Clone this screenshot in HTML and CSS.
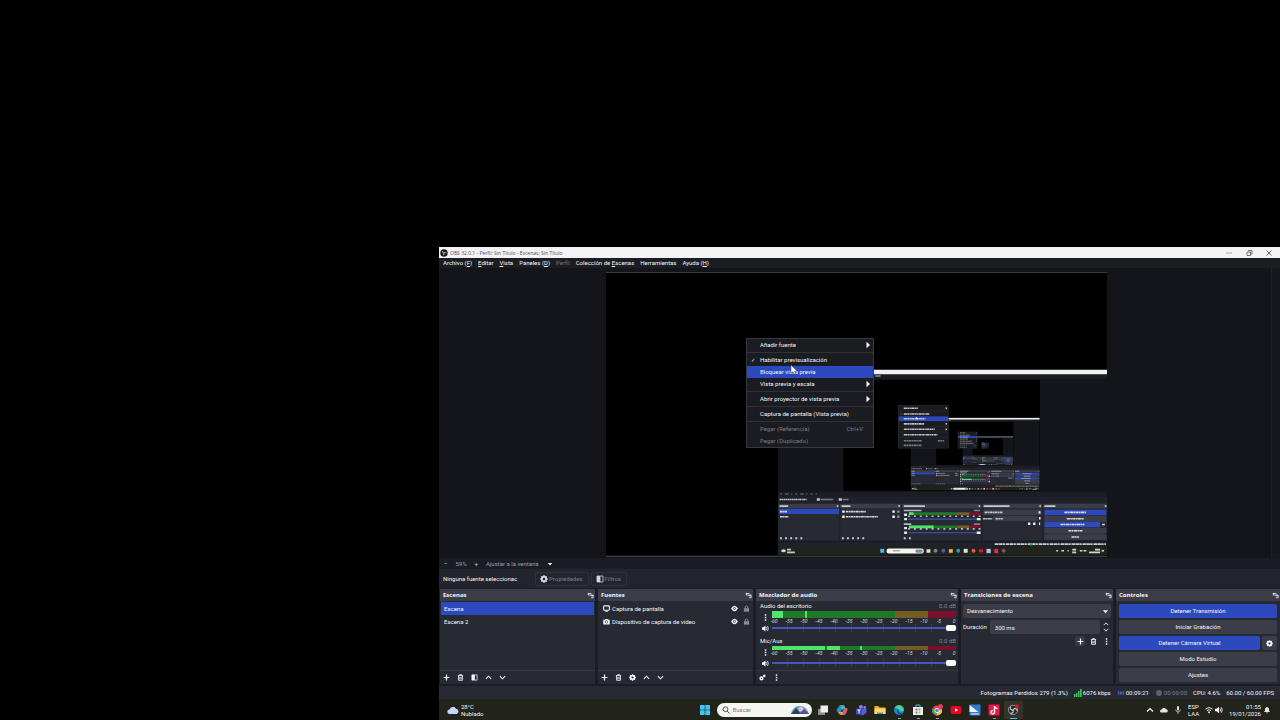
FILE: index.html
```html
<!DOCTYPE html>
<html lang="es">
<head>
<meta charset="utf-8">
<title>OBS 32.0.1 - Perfil: Sin Título - Escenas: Sin Título</title>
<link rel="stylesheet" href="styles.css">
</head>
<body>
<svg class="sprite" aria-hidden="true">
  <symbol id="i-plus" viewBox="0 0 8 8"><path d="M4 .7v6.600M.7 4h6.600" fill="none" stroke="currentColor" stroke-width="1.400"/></symbol>
  <symbol id="i-trash" viewBox="0 0 8 8"><path d="M1 1.800h6M3 1.500V.7h2v.8M1.800 2v5.200h4.400V2M3.300 3.300v2.800M4.700 3.300v2.800" fill="none" stroke="currentColor" stroke-width="1"/></symbol>
  <symbol id="i-filter" viewBox="0 0 8 8"><path d="M1 1h6v6H1z" fill="none" stroke="currentColor" stroke-width=".8"/><path d="M1 1h3.400v6H1z" fill="currentColor"/></symbol>
  <symbol id="i-up" viewBox="0 0 8 8"><path d="M1 5.500l3-3 3 3" fill="none" stroke="currentColor" stroke-width="1.200"/></symbol>
  <symbol id="i-down" viewBox="0 0 8 8"><path d="M1 2.500l3 3 3-3" fill="none" stroke="currentColor" stroke-width="1.200"/></symbol>
  <symbol id="i-gear" viewBox="0 0 8 8"><circle cx="4" cy="4" r="2.200" fill="none" stroke="currentColor" stroke-width="1.900"/><path d="M4 .3v1M4 6.700v1M.3 4h1M6.700 4h1M1.400 1.400l.8.8M5.800 5.800l.8.8M6.600 1.400l-.8.8M2.200 5.800l-.8.8" stroke="currentColor" stroke-width="1.500"/></symbol>
  <symbol id="i-gears" viewBox="0 0 8 8"><circle cx="2.800" cy="5" r="1.500" fill="none" stroke="currentColor" stroke-width="1.700"/><circle cx="6" cy="2.200" r=".9" fill="none" stroke="currentColor" stroke-width="1.200"/></symbol>
  <symbol id="i-dots" viewBox="0 0 8 8"><path d="M3.200.3h1.700V2H3.200zM3.200 3.200h1.700v1.700H3.200zM3.200 6.100h1.700v1.700H3.200z" fill="currentColor"/></symbol>
  <symbol id="i-dock" viewBox="0 0 8 8"><path d="M1 1.700h4M1.500 1v2.500H4M4 3.500h3v3H4.500M4 4.200h3" fill="none" stroke="currentColor" stroke-width=".9"/></symbol>
  <symbol id="i-screen" viewBox="0 0 8 8"><rect x=".7" y="1" width="6.600" height="5" rx=".8" fill="none" stroke="currentColor" stroke-width="1.200"/><path d="M2.500 7.300h3" stroke="currentColor"/></symbol>
  <symbol id="i-camera" viewBox="0 0 8 8"><path d="M.3 2h1.900l.6-1h2.400l.6 1h1.900v5.300H.3z" fill="currentColor"/><circle cx="4" cy="4.500" r="1.400" fill="none" stroke="#272a33" stroke-width=".7"/></symbol>
  <symbol id="i-eye" viewBox="0 0 8 8"><path d="M0 4q4-6.500 8 0-4 6.500-8 0z" fill="currentColor"/><circle cx="4" cy="4" r="1.300" fill="none" stroke="#272a33" stroke-width=".8"/></symbol>
  <symbol id="i-lock" viewBox="0 0 8 8"><path d="M1 3.700h6v3.900H1z" fill="currentColor"/><path d="M2.500 3.700V1.900q1.500-1.800 3 0v1.800" fill="none" stroke="currentColor" stroke-width="1"/></symbol>
  <symbol id="i-speaker" viewBox="0 0 8 8"><path d="M0 2.700h1.500L4 .7v6.600L1.500 5.300H0z" fill="currentColor"/><path d="M5 2.400q1.200 1.600 0 3.200M6.200 1.200q2.200 2.800 0 5.600" fill="none" stroke="currentColor" stroke-width=".9"/></symbol>
  <symbol id="i-caret" viewBox="0 0 8 8"><path d="M1 2.500h6L4 6z" fill="currentColor"/></symbol>
  <symbol id="i-right" viewBox="0 0 8 8"><path d="M2.500.8L6 4 2.500 7.200z" fill="currentColor"/></symbol>
  <symbol id="i-obs" viewBox="0 0 16 16"><circle cx="8" cy="8" r="7.500" fill="#24242a"/><circle cx="8" cy="8" r="6.300" fill="none" stroke="#b9b9b9" stroke-width="1"/><path d="M8 8c-4 .5-4.500-3-2.500-4.500M8 8c2-3.500 5-1.500 5.200 1M8 8c1.700 3.200-1.400 5.200-4 4" fill="none" stroke="#c8c8c8" stroke-width="1.600"/></symbol>
  <symbol id="i-obs-small" viewBox="0 0 8 8"><circle cx="4" cy="4" r="3.700" fill="#17171b"/><path d="M4 4Q2 4 2.500 2M4 4q1.200-1.700 2.300-.4M4 4q.8 1.800-1 2" fill="none" stroke="#ddd" stroke-width=".8"/></symbol>

  <symbol id="mini-desk" viewBox="0 0 1280 720">
    <rect width="1280" height="720" fill="#000"/>
    <rect x="439" y="247" width="841" height="473" fill="#14151a"/>
    <rect x="439" y="247" width="841" height="12" fill="#f0f1f4"/>
    <rect x="439" y="259" width="841" height="11" fill="#1b1d22"/>
    <path d="M443 263h262" stroke="#8d8f94" stroke-width="4" stroke-dasharray="22 8 14 7 12 7 28 9"/>
    <rect x="606" y="273" width="501" height="283" fill="#000"/>
    <rect x="439" y="558" width="841" height="12" fill="#1b1d25"/>
    <path d="M444 564h94" stroke="#73767e" stroke-width="3" stroke-dasharray="5 8 9 6 3 8"/>
    <rect x="439" y="570" width="841" height="129" fill="#20222b"/>
    <path d="M443 578h70" stroke="#c5c6ca" stroke-width="4" stroke-dasharray="5 1 3 1"/>
    <path d="M538 578h8M594 578h8" stroke="#c5c6ca" stroke-width="6"/><path d="M548 578h32M604 578h15" stroke="#777a83" stroke-width="4"/>
    <path d="M440 595h155M598 595h155M756 595h202M961 595h152M1116 595h164" stroke="#3b3e49" stroke-width="12"/>
    <path d="M440 643h155M598 643h155M756 643h202M961 643h152M1116 643h164" stroke="#272a33" stroke-width="82"/>
    <path d="M443 595h22M601 595h23M760 595h54M964 595h66M1119 595h28M589 595h4M746 595h4M951 595h4M1106 595h4M1273 595h4" stroke="#c8c9cf" stroke-width="4"/>
    <rect x="441" y="602" width="154" height="13" fill="#2c4abd"/>
    <path d="M444 609h18M444 622h22M612 609h51M612 622h82" stroke="#d5d6db" stroke-width="4" stroke-dasharray="7 1 4 1"/>
    <path d="M603 609h6M603 622h6M731 609h6M731 622h6" stroke="#fff" stroke-width="6"/><path d="M743 609h6M743 622h6" stroke="#8a8d94" stroke-width="6"/>
    <path d="M760 606h45M760 641h19" stroke="#b5b7be" stroke-width="4"/><path d="M939 606h16M939 641h16" stroke="#7c7f88" stroke-width="4"/>
    <path d="M773 614h122M773 648h122" stroke="#1f7a28" stroke-width="7"/><path d="M895 614h33M895 648h33" stroke="#735c22" stroke-width="7"/><path d="M928 614h28M928 648h28" stroke="#7b102c" stroke-width="7"/>
    <path d="M773 614h12M773 648h63" stroke="#50e468" stroke-width="7"/>
    <path d="M771 621h185M771 653h185" stroke="#b9bbc0" stroke-width="4" stroke-dasharray="5 10"/>
    <path d="M761 617h7M761 651h7M761 628h7M761 663h7M946 628h10M946 663h10" stroke="#eee" stroke-width="6"/>
    <path d="M771 628h175M771 663h175" stroke="#4055b0" stroke-width="3"/>
    <rect x="963" y="604" width="148" height="14" fill="#3b3e49"/><rect x="989" y="620" width="112" height="13" fill="#3b3e49"/>
    <path d="M966 611h46M962 627h24M994 627h19" stroke="#c2c4ca" stroke-width="4" stroke-dasharray="7 1 4 1"/>
    <path d="M1104 611h5M1105 626h4M1077 640h6M1090 640h6M1105 640h3" stroke="#eee" stroke-width="6"/>
    <path d="M1119 627h158M1119 658h158M1119 674h158" stroke="#3b3e49" stroke-width="14"/><path d="M1119 611h158M1119 642h142" stroke="#2c4abd" stroke-width="14"/>
    <path d="M1170 611h55M1176 627h44M1160 642h61M1180 658h37M1188 674h19M1266 642h7" stroke="#d9dae0" stroke-width="4" stroke-dasharray="8 1 4 1"/>
    <path d="M444 677h62M602 677h62M760 677h22" stroke="#c9cad0" stroke-width="5" stroke-dasharray="5 8"/>
    <path d="M439 685h841" stroke="#191b23" stroke-width="3"/>
    <path d="M992 692h284" stroke="#c9cad0" stroke-width="4" stroke-dasharray="10 1 8 1 6 2"/><path d="M1081 692h8" stroke="#36ba50" stroke-width="6"/>
    <rect x="439" y="699" width="841" height="21" fill="#22231a"/>
    <ellipse cx="453" cy="709" rx="6" ry="4" fill="#c8d6f1"/><path d="M462 706h10M462 713h20" stroke="#c7c8c4" stroke-width="4"/>
    <rect x="700" y="704" width="10" height="10" fill="#42bff1"/><rect x="716" y="703" width="95" height="13" rx="6" fill="#f4f5f2"/><path d="M732 709h18" stroke="#999" stroke-width="3"/><rect x="790" y="706" width="18" height="8" rx="3" fill="#7190a3"/>
    <rect x="818" y="705" width="10" height="9" fill="#ddd"/><circle cx="841" cy="709" r="5" fill="#6d8892"/><circle cx="861" cy="709" r="5" fill="#5257bb"/><rect x="875" y="705" width="10" height="9" fill="#eebc45"/><circle cx="899" cy="709" r="5" fill="#249dc9"/><rect x="913" y="704" width="10" height="10" fill="#dce5e7"/><circle cx="938" cy="709" r="5" fill="#db5b46"/><rect x="952" y="705" width="10" height="8" fill="#e31531"/><rect x="971" y="704" width="11" height="11" fill="#a7c8e6"/><rect x="991" y="704" width="10" height="11" fill="#ed2452"/><circle cx="1015" cy="709" r="5" fill="#80545a"/>
    <path d="M1149 709h5M1162 709h7M1178 709h3M1190 706h10M1190 713h10M1209 709h7M1219 709h7M1248 706h13M1233 713h28M1265 709h6" stroke="#d4d5d0" stroke-width="4"/>
  </symbol>
  <symbol id="mini-menu" viewBox="0 0 1280 720">
    <rect x="746" y="338" width="128" height="109" fill="#1b1c22" stroke="#393b43"/>
    <rect x="747" y="366" width="126" height="12" fill="#2c4abd"/>
    <path d="M760 345h36M760 360h65M760 372h55M760 385h52M760 399h79M760 413h86" stroke="#c4c5ca" stroke-width="4" stroke-dasharray="8 1 5 1 3 1"/>
    <path d="M760 428h46M760 440h45M847 428h16" stroke="#777980" stroke-width="4" stroke-dasharray="7 1 4 1"/>
    <path d="M747 352h126M747 392h126M747 406h126M747 420h126" stroke="#33353e"/>
    <path d="M867 342l4 3-4 3zM867 382l4 3-4 3zM867 396l4 3-4 3zM791 366l6 7h-5z" fill="#fff"/><path d="M751 359l2 2 3-3" fill="none" stroke="#ccc"/>
  </symbol>
</svg>

<div class="desktop">
  <main class="window">
    <header class="titlebar">
      <svg class="ic"><use href="#i-obs-small"/></svg>
      <h1>OBS 32.0.1 - Perfil: Sin Título - Escenas: Sin Título</h1>
      <div class="winbtns">
        <button aria-label="Minimizar"><svg class="ic" viewBox="0 0 8 8"><path d="M1 4h6" stroke="#999" stroke-width=".8"/></svg></button>
        <button aria-label="Restaurar"><svg class="ic" viewBox="0 0 8 8"><path d="M2 3h3.500v3.500H2zM3.500 2.500v-1H7V5H6" fill="none" stroke="#555" stroke-width=".8"/></svg></button>
        <button aria-label="Cerrar"><svg class="ic" viewBox="0 0 8 8"><path d="M1.500 1.500l5 5M6.500 1.500l-5 5" stroke="#444" stroke-width=".8"/></svg></button>
      </div>
    </header>
    <nav class="menubar">
      <button>Archivo (<u>F</u>)</button><button><u>E</u>ditar</button><button><u>V</u>ista</button><button>Paneles (<u>D</u>)</button><button disabled>Perfil</button><button>Colección de <u>E</u>scenas</button><button>Herramientas</button><button>Ayuda (<u>H</u>)</button>
    </nav>

    <section class="preview">
      <svg class="canvas" viewBox="0 0 1280 720" role="img" aria-label="Vista previa">
        <g id="content">
          <use href="#mini-desk" width="1280" height="720"/>
          <svg x="606" y="273" width="501" height="282" viewBox="0 0 1280 720">
            <use href="#mini-desk" width="1280" height="720"/>
            <svg x="606" y="273" width="501" height="282" viewBox="0 0 1280 720">
              <use href="#mini-desk" width="1280" height="720"/>
              <use href="#mini-menu" width="1280" height="720"/>
            </svg>
            <use href="#mini-menu" width="1280" height="720"/>
          </svg>
          <use href="#mini-menu" width="1280" height="720"/>
        </g>
      </svg>
      <div class="scroll"></div>
      <div class="context" role="menu">
        <button role="menuitem">Añadir fuente<svg class="ic"><use href="#i-right"/></svg></button>
        <hr>
        <button role="menuitem" class="checked">Habilitar previsualización</button>
        <button role="menuitem" class="active">Bloquear vista previa</button>
        <button role="menuitem">Vista previa y escala<svg class="ic"><use href="#i-right"/></svg></button>
        <hr>
        <button role="menuitem">Abrir proyector de vista previa<svg class="ic"><use href="#i-right"/></svg></button>
        <hr>
        <button role="menuitem">Captura de pantalla (Vista previa)</button>
        <hr>
        <button role="menuitem" disabled>Pegar (Referencia)<span class="key">Ctrl+V</span></button>
        <button role="menuitem" disabled>Pegar (Duplicado)</button>
        <svg class="cursor" viewBox="0 0 8 10"><path d="M1 0v8l2-1.500L4.300 9l1.200-.6-1-2.400H7z" fill="#fff" stroke="#333" stroke-width=".4"/></svg>
      </div>
    </section>

    <div class="zoombar">
      <button aria-label="Alejar">−</button><span>59%</span><button aria-label="Acercar">+</button>
      <select aria-label="Escala"><option>Ajustar a la ventana</option></select>
      <svg class="ic"><use href="#i-caret"/></svg>
    </div>
    <div class="sourcebar">
      <span class="none">Ninguna fuente seleccionac</span>
      <button disabled><svg class="ic"><use href="#i-gear"/></svg>Propiedades</button>
      <button disabled><svg class="ic"><use href="#i-filter"/></svg>Filtros</button>
    </div>

    <div class="docks">
      <section class="dock">
        <h2>Escenas<svg class="ic"><use href="#i-dock"/></svg></h2>
        <ul class="list"><li class="sel">Escena</li><li>Escena 2</li></ul>
        <footer><button aria-label="Añadir"><svg class="ic"><use href="#i-plus"/></svg></button><button aria-label="Eliminar"><svg class="ic"><use href="#i-trash"/></svg></button><button aria-label="Filtros"><svg class="ic"><use href="#i-filter"/></svg></button><button aria-label="Subir"><svg class="ic"><use href="#i-up"/></svg></button><button aria-label="Bajar"><svg class="ic"><use href="#i-down"/></svg></button></footer>
      </section>
      <section class="dock">
        <h2>Fuentes<svg class="ic"><use href="#i-dock"/></svg></h2>
        <ul class="list sources">
          <li><svg class="ic"><use href="#i-screen"/></svg><span>Captura de pantalla</span><svg class="ic"><use href="#i-eye"/></svg><svg class="ic dim"><use href="#i-lock"/></svg></li>
          <li><svg class="ic"><use href="#i-camera"/></svg><span>Dispositivo de captura de video</span><svg class="ic"><use href="#i-eye"/></svg><svg class="ic dim"><use href="#i-lock"/></svg></li>
        </ul>
        <footer><button aria-label="Añadir"><svg class="ic"><use href="#i-plus"/></svg></button><button aria-label="Eliminar"><svg class="ic"><use href="#i-trash"/></svg></button><button aria-label="Propiedades"><svg class="ic"><use href="#i-gear"/></svg></button><button aria-label="Subir"><svg class="ic"><use href="#i-up"/></svg></button><button aria-label="Bajar"><svg class="ic"><use href="#i-down"/></svg></button></footer>
      </section>
      <section class="dock">
        <h2>Mezclador de audio<svg class="ic"><use href="#i-dock"/></svg></h2>
        <div class="mixer">
          <div class="channel">
            <div class="name"><label for="v1">Audio del escritorio</label><span>0.0 dB</span></div>
            <button aria-label="Opciones"><svg class="ic"><use href="#i-dots"/></svg></button>
            <div class="meter"><div class="level desk"></div><div class="scale"><i>-60</i><i>-55</i><i>-50</i><i>-45</i><i>-40</i><i>-35</i><i>-30</i><i>-25</i><i>-20</i><i>-15</i><i>-10</i><i>-5</i><i>0</i></div></div>
            <button aria-label="Silenciar"><svg class="ic"><use href="#i-speaker"/></svg></button>
            <input id="v1" type="range" value="100">
          </div>
          <div class="channel">
            <div class="name"><label for="v2">Mic/Aux</label><span>0.0 dB</span></div>
            <button aria-label="Opciones"><svg class="ic"><use href="#i-dots"/></svg></button>
            <div class="meter"><div class="level mic"></div><div class="scale"><i>-60</i><i>-55</i><i>-50</i><i>-45</i><i>-40</i><i>-35</i><i>-30</i><i>-25</i><i>-20</i><i>-15</i><i>-10</i><i>-5</i><i>0</i></div></div>
            <button aria-label="Silenciar"><svg class="ic"><use href="#i-speaker"/></svg></button>
            <input id="v2" type="range" value="100">
          </div>
        </div>
        <footer><button aria-label="Ajustes de audio"><svg class="ic"><use href="#i-gears"/></svg></button><button aria-label="Más"><svg class="ic"><use href="#i-dots"/></svg></button></footer>
      </section>
      <section class="dock">
        <h2>Transiciones de escena<svg class="ic"><use href="#i-dock"/></svg></h2>
        <div class="trans">
          <div class="combo"><select aria-label="Transición"><option>Desvanecimiento</option></select><svg class="ic"><use href="#i-caret"/></svg></div>
          <div class="duration"><label for="dur">Duración</label><input id="dur" type="text" value="300 ms"><span class="spin"><button aria-label="Más"><svg><use href="#i-up"/></svg></button><button aria-label="Menos"><svg><use href="#i-down"/></svg></button></span></div>
          <div class="tools"><button class="box" aria-label="Añadir"><svg class="ic"><use href="#i-plus"/></svg></button><button aria-label="Eliminar"><svg class="ic"><use href="#i-trash"/></svg></button><button aria-label="Opciones"><svg class="ic"><use href="#i-dots"/></svg></button></div>
        </div>
      </section>
      <section class="dock">
        <h2>Controles<svg class="ic"><use href="#i-dock"/></svg></h2>
        <div class="controls">
          <button class="on">Detener Transmisión</button>
          <button>Iniciar Grabación</button>
          <div class="pair"><button class="on">Detener Cámara Virtual</button><button aria-label="Configurar cámara"><svg class="ic"><use href="#i-gear"/></svg></button></div>
          <button>Modo Estudio</button>
          <button>Ajustes</button>
        </div>
      </section>
    </div>

    <div class="status">
      <span>Fotogramas Perdidos 279 (1.3%)</span>
      <span><svg class="ic" viewBox="0 0 8 8"><path d="M0 5h1.500v3H0zM2 4h1.500v4H2zM4 2h1.500v6H4zM6 0h1.700v8H6z" fill="#37c250"/></svg>6076 kbps</span>
      <span><svg class="ic" viewBox="0 0 8 8"><circle cx="4" cy="4" r="1.500" fill="#3f63d0"/><path d="M2 2q-1.600 2 0 4M6 2q1.600 2 0 4" fill="none" stroke="#3f63d0"/></svg>00:09:21</span>
      <span class="off"><svg class="ic" viewBox="0 0 8 8"><circle cx="4" cy="4" r="3" fill="#5c5f68"/></svg>00:00:00</span>
      <span>CPU: 4.6%</span>
      <span>60.00 / 60.00 FPS</span>
    </div>

    <footer class="taskbar">
      <div class="weather">
        <svg viewBox="0 0 12 10"><path d="M2.500 9a2.200 2.200 0 010-4.400A3.500 3.500 0 019 3.700 2.700 2.700 0 019.500 9z" fill="#c6d5f4"/></svg>
        <span>28°C<br>Nublado</span>
      </div>
      <div class="apps">
        <button aria-label="Inicio"><svg viewBox="0 0 12 12"><path d="M1 1h4.700v4.700H1zM6.300 1H11v4.700H6.300zM1 6.300h4.700V11H1zM6.300 6.300H11V11H6.300z" fill="#43c4f4"/></svg></button>
        <label class="search"><svg class="ic" viewBox="0 0 8 8"><circle cx="3.500" cy="3.200" r="2.400" fill="none" stroke="#3d4045" stroke-width=".9"/><path d="M5.200 5L7.500 7.500" stroke="#3d4045" stroke-width=".9"/></svg><input type="text" placeholder="Buscar" aria-label="Buscar"><svg class="art" viewBox="0 0 18 10"><path d="M0 9Q2 1 8 1q7-1 10 8z" fill="#57a6b0"/><path d="M0 9l5-6 5 6z" fill="#353b62"/><circle cx="10" cy="4" r="2.500" fill="#ddc2df"/><path d="M8 9l5-5 5 5z" fill="#634a94"/></svg></label>
        <button aria-label="Vista de tareas"><svg viewBox="0 0 12 12"><path d="M1 5h7v6H1z" fill="#8b8b87"/><path d="M3.500 1.500H11v7H3.500z" fill="#eee"/></svg></button>
        <button aria-label="Copilot"><svg viewBox="0 0 12 12"><path d="M4 1h3L5 8H2Q0 8 1 5z" fill="#268ed5"/><path d="M7 1q2 0 2 3l-3 2-1-3z" fill="#43c2a6"/><path d="M8 4h3q1 0 0 3-1 4-3 4H5z" fill="#d95a88"/><path d="M2 8h5l-1 3q-3 0-4-3z" fill="#e9a23a"/></svg></button>
        <button aria-label="Teams"><svg viewBox="0 0 12 12"><circle cx="6" cy="3" r="2" fill="#7c85ef"/><circle cx="9.700" cy="3.500" r="1.400" fill="#7c85ef"/><path d="M3 5h8.500v3.500Q9 12 5 11z" fill="#575dd0"/><path d="M1 4.500h6v6H1z" fill="#4148b5"/><path d="M2.500 6h3M4 6v3.500" stroke="#fff"/></svg></button>
        <button aria-label="Explorador"><svg viewBox="0 0 12 12"><path d="M.5 2h4l1 1.500h6V10H.5z" fill="#eba92b"/><path d="M.5 4.500h11V10H.5z" fill="#ffd969"/><path d="M3 8.500h6V10H3z" fill="#4b8dca"/></svg></button>
        <button class="run" aria-label="Edge"><svg viewBox="0 0 12 12"><circle cx="6" cy="6" r="5" fill="#1689cf"/><path d="M1.500 4Q6-2 10.500 4q1.500 4-4 3.500 1-3-5-3.500z" fill="#4ad09c"/><path d="M5 6q-1 4 4.500 4" fill="none" stroke="#13467f" stroke-width="1.500"/></svg></button>
        <button class="run" aria-label="Store"><svg viewBox="0 0 12 12"><path d="M4 3V1h4v2" fill="none" stroke="#45b9e6"/><path d="M1 3h10v8H1z" fill="#eef1f2"/><path d="M3.500 4.500h2v2h-2z" fill="#e44d3a"/><path d="M6.500 4.500h2v2h-2z" fill="#74b43c"/><path d="M3.500 7.500h2v2h-2z" fill="#3797dc"/><path d="M6.500 7.500h2v2h-2z" fill="#eeb42f"/></svg></button>
        <button class="run" aria-label="Chrome"><svg viewBox="0 0 12 12"><circle cx="6" cy="6.500" r="5" fill="#e24635"/><path d="M1.500 4.500L6 7l-1 4.500q-5-2-3.500-7z" fill="#38a852"/><path d="M11 5q1 6-6 6.500L7.500 7z" fill="#f4c72f"/><circle cx="6" cy="6.500" r="2.200" fill="#468bed" stroke="#fff" stroke-width=".8"/><circle cx="9.500" cy="2.500" r="2.500" fill="#df3b67"/></svg></button>
        <button aria-label="YouTube"><svg viewBox="0 0 12 12"><rect x=".5" y="2" width="11" height="8" rx="2" fill="#e40725"/><path d="M5 4.300L8 6 5 7.700z" fill="#fff"/></svg></button>
        <button aria-label="Editor"><svg viewBox="0 0 12 12"><path d="M.5.5h11v11H.5z" fill="#2f7bd0"/><path d="M.5 1l9 7H.5z" fill="#eaf3fb"/><path d="M2 10h8" stroke="#fff"/></svg></button>
        <button class="run" aria-label="TikTok"><svg viewBox="0 0 12 12"><rect x=".5" y=".5" width="11" height="11" rx="1" fill="#ed1747"/><path d="M6.500 2v6a1.700 1.700 0 11-1.700-1.500M6.500 2.500Q7.500 4.500 9.500 4.500" fill="none" stroke="#fff" stroke-width="1.400"/></svg></button>
        <button class="run current" aria-label="OBS"><svg viewBox="0 0 12 12"><use href="#i-obs" width="12" height="12"/><circle cx="9.800" cy="2.200" r="2" fill="#e11622"/></svg></button>
      </div>
      <div class="tray">
        <svg class="ic"><use href="#i-up"/></svg>
        <svg class="ic" viewBox="0 0 8 8"><path d="M1.500 6.500a1.500 1.500 0 010-3Q4 0 6.200 3.300a1.600 1.600 0 010 3.200z" fill="#e5e5df"/></svg>
        <svg class="ic" viewBox="0 0 8 8"><rect x="3" y="0" width="2" height="4.500" rx="1" fill="#e5e5df"/><path d="M1.700 3.500q0 2.400 2.300 2.400t2.300-2.400M4 6v2" fill="none" stroke="#e5e5df" stroke-width=".7"/></svg>
        <span class="lang">ESP<br>LAA</span>
        <span class="net"><svg class="ic" viewBox="0 0 8 8"><path d="M.5 3q3.500-3 7 0M1.800 4.700q2.200-2 4.400 0" fill="none" stroke="#e5e5df"/><circle cx="4" cy="6.300" r="1" fill="#e5e5df"/></svg><svg class="ic"><use href="#i-speaker"/></svg></span>
        <time>01:55<br>19/01/2026</time>
        <svg class="ic" viewBox="0 0 8 8"><path d="M1 6l1-1.500V2.500q2-3 4 0v2L7 6zM3 6.500h2L4 7.700z" fill="#e5e5df"/></svg>
      </div>
    </footer>
  </main>
</div>
</body>
</html>
```
FILE: styles.css
```css
* { box-sizing: border-box; }
body {
  margin: 0;
  background: #000;
  color: #f5f6f8;
  font: 400 6px/8px Roboto, "Open Sans", sans-serif;
}
button, select, input {
  margin: 0;
  padding: 0;
  border: 0;
  background: none;
  color: inherit;
  font: inherit;
  appearance: none;
}
h1, h2, ul { margin: 0; padding: 0; font-size: inherit; }
ul { list-style: none; }
svg { display: block; flex: none; }
.sprite { position: absolute; width: 0; height: 0; }
.ic { width: 8px; height: 8px; }
.desktop {
  min-height: 100vh;
  padding: 247px 0 0 439px;
  display: flex;
}
.window {
  flex: 1;
  min-width: 0;
  display: flex;
  flex-direction: column;
  background: #1b1d25;
}

.titlebar {
  display: flex;
  align-items: center;
  gap: 2px;
  height: 11px;
  padding: 0 7px 0 1px;
  background: #f3f3f6;
  color: #4d4e52;
}
.titlebar h1 { flex: 1; font: 400 5px/8px "Open Sans", sans-serif; }
.winbtns { display: flex; gap: 12px; }
.menubar {
  display: flex;
  gap: 6px;
  height: 10px;
  padding: 0 4px;
  background: #1b1d22;
}
.menubar button:disabled { color: #6e7077; }

.preview {
  position: relative;
  display: flex;
  justify-content: center;
  flex: 1;
  padding: 4px 9px 1px 3px;
  background: #14151a;
}
.canvas {
  width: 60.5%;
  height: auto;
  align-self: center;
  border-top: 1px solid #3b3c40;
  border-bottom: 1px solid #3b3c40;
}
.scroll { position: absolute; right: 0; top: 0; bottom: 0; width: 9px; border-left: 1px solid #202126; background: #17181d; }
.context {
  position: absolute;
  left: 307px;
  top: 70px;
  width: 128px;
  display: flex;
  flex-direction: column;
  border: 1px solid #373941;
  background: #1b1c22;
}
.context button {
  display: flex;
  align-items: center;
  justify-content: space-between;
  height: 12px;
  padding: 0 1px 0 13px;
  text-align: left;
}
.context .active { background: #2c4abd; }
.context button:disabled { color: #7b7d84; }
.context .key { padding-right: 9px; }
.context hr { width: 100%; height: 1px; margin: 1px 0; border: 0; background: #30323a; }
.context .checked { padding-left: 4px; justify-content: flex-start; }
.checked::before { content: "✓"; width: 9px; font-size: 5px; }
.cursor { position: absolute; left: 43px; top: 26px; width: 8px; height: 10px; }

.zoombar {
  display: flex;
  align-items: center;
  gap: 8px;
  height: 11px;
  padding: 0 5px;
  color: #9b9da4;
}
.zoombar button { color: #d5d6da; }
.zoombar .ic, .combo .ic { width: 6px; height: 6px; color: #f0f1f4; }
.sourcebar {
  display: flex;
  align-items: center;
  gap: 2px;
  height: 19px;
  padding: 0 4px;
  background: #23252e;
}
.none { width: 71px; margin-right: 19px; white-space: nowrap; }
.sourcebar button {
  display: flex;
  align-items: center;
  gap: 1px;
  height: 14px;
  padding: 0 5px 0 4px;
  border: 1px solid #2f323c;
  border-radius: 2px;
  color: #7d8088;
}
.sourcebar .ic { color: #d5d6da; }

.docks {
  display: grid;
  grid-template-columns: 155fr 155fr 202fr 152fr 164fr;
  gap: 3px;
  padding: 1px 0 2px 1px;
  min-height: 98px;
}
.dock {
  min-width: 0;
  display: flex;
  flex-direction: column;
  background: #272a33;
}
.dock h2 {
  display: flex;
  align-items: center;
  justify-content: space-between;
  height: 12px;
  padding: 0 1px 0 3px;
  background: #3b3e49;
  font-family: "Open Sans", sans-serif;
  font-weight: 700;
}
.dock .ic { width: 7px; height: 7px; }
.dock footer {
  display: flex;
  gap: 7px;
  height: 14px;
  margin-top: auto;
  padding: 0 3px;
  align-items: center;
  border-top: 1px solid #343741;
}
.list { padding: 1px; }
.list li { display: flex; align-items: center; height: 13px; padding: 0 3px; }
.list .sel { background: #2c4abd; }
.sources li { gap: 2px; padding: 0 2px 0 4px; }
.sources span { flex: 1; white-space: nowrap; }
.sources .dim { margin-left: 3px; color: #8a8d95; }

.mixer { padding: 1px 2px 0 4px; }
.channel {
  display: grid;
  grid-template-columns: 10px 1fr;
  column-gap: 2px;
  grid-template-rows: 8px 14px 8px;
  margin-bottom: 5px;
}
.channel:last-child { margin-bottom: 0; }
.channel button { display: grid; place-items: center; }
.name { grid-column: 1 / 3; display: flex; justify-content: space-between; }
.name span { color: #848790; }
.level { height: 7px; margin-top: 1px; }
.desk { background: linear-gradient(90deg, #50e468 0 6%, #1f7a28 6% 18%, #50e468 18% 19%, #1f7a28 19% 67%, #735c22 67% 85%, #7b102c 85%); }
.mic { height: 4px; background: linear-gradient(90deg, #50e468 0 29%, #1f7a28 29% 30%, #50e468 30% 37%, #1f7a28 37% 48%, #50e468 48% 49%, #1f7a28 49% 67%, #735c22 67% 85%, #7b102c 85%); }
.scale { display: flex; justify-content: space-between; font-size: 5px; line-height: 6px; color: #d5d6da; }
.scale i { width: 8px; margin: 0 -2px; text-align: center; }
input[type="range"] {
  width: 100%;
  height: 8px;
  background: linear-gradient(#4359b8 0 0) center / 100% 2px no-repeat, repeating-linear-gradient(90deg, transparent 0 15px, #303b68 15px 16px);
}
input[type="range"]::-webkit-slider-thumb { appearance: none; width: 10px; height: 6px; border-radius: 2px; background: #fff; }

.trans { display: flex; flex-direction: column; gap: 2px; padding: 3px 2px; }
.combo { display: flex; align-items: center; height: 14px; padding: 0 2px 0 4px; border-radius: 2px; background: #3b3e49; }
.combo select { flex: 1; }
.duration { display: flex; align-items: center; gap: 3px; height: 14px; }
.duration input { flex: 1; min-width: 0; height: 14px; padding: 0 5px; border-radius: 2px; background: #3b3e49; }
.spin { display: flex; flex-direction: column; width: 8px; }
.spin svg { width: 6px; height: 6px; }
.tools { display: flex; justify-content: flex-end; gap: 3px; }
.tools button { width: 10px; height: 10px; display: grid; place-items: center; }
.box { border-radius: 2px; background: #363944; }

.controls { display: flex; flex-direction: column; gap: 2px; padding: 3px 3px 0; }
.controls button { height: 14px; flex: none; border-radius: 2px; background: #3b3e49; }
.controls .pair { display: flex; gap: 2px; }
.controls .pair .on { flex: 1; }
.controls .on { background: #2c4abd; }
.pair button:last-child { width: 15px; display: grid; place-items: center; }

.status {
  display: flex;
  justify-content: flex-end;
  align-items: center;
  gap: 6px;
  height: 13px;
  padding: 0 6px;
  background: #272a33;
}
.status span { display: flex; align-items: center; gap: 1px; white-space: nowrap; }
.status .off { color: #7d8088; }

.taskbar {
  display: grid;
  grid-template-columns: 1fr auto 1fr;
  align-items: center;
  height: 21px;
  padding: 0 9px 0 8px;
  background: #22231a;
  line-height: 7px;
}
.weather { display: flex; align-items: center; gap: 2px; }
.weather svg { width: 12px; height: 10px; }
.apps { display: flex; align-items: center; }
.apps button { position: relative; width: 19px; height: 18px; display: grid; place-items: center; flex: none; }
.apps button svg { width: 12px; height: 12px; }
.run::after { content: ""; position: absolute; left: 8px; bottom: 0; width: 3px; height: 1px; background: #9da09a; }
.current { border-radius: 2px; background: #33342c; }
.current::after { left: 6px; width: 7px; background: #53bfd6; }
.search {
  display: flex;
  align-items: center;
  gap: 3px;
  width: 95px;
  height: 14px;
  margin: 0 2px;
  padding: 0 3px 0 5px;
  border-radius: 7px;
  background: #f5f5f2;
  color: #676970;
}
.search input { flex: 1; min-width: 0; }
.search input::placeholder { color: #74767b; }
.art { width: 18px; height: 10px; }
.tray { display: flex; justify-content: flex-end; align-items: center; gap: 6px; }
.lang { text-align: center; }
.net { display: flex; gap: 2px; }
.tray time { text-align: right; }
.tray > :last-child { margin-left: -4px; }
```
